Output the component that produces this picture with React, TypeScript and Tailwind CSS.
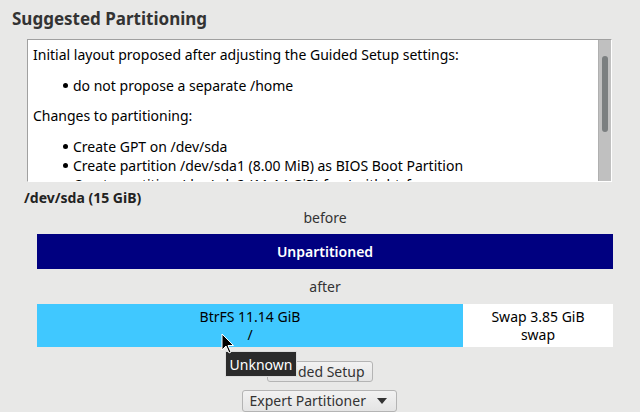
import React from "react";

const font = { fontFamily: '"Noto Sans", "Open Sans", sans-serif' };

function Bullet({ children }: { children: React.ReactNode }) {
  return (
    <div className="flex items-center h-[19px] pl-[30px] whitespace-nowrap">
      <span className="w-[5px] h-[5px] rounded-full bg-black mr-[5px]" />
      <span>{children}</span>
    </div>
  );
}

export default function App() {
  return (
    <div
      className="relative w-[640px] h-[412px] overflow-hidden bg-[#e8e8e7] text-[#202020]"
      style={font}
    >
      <div className="pl-[12px] pt-[7px] h-[39px]">
        <h1 className="text-[17px] font-bold leading-[24px] text-[#333]">Suggested Partitioning</h1>
      </div>
      <div className="ml-[27px] w-[585px] h-[143px] flex border-t border-l border-[#a0a0a0] border-b border-r border-b-white border-r-white bg-white">
        <div className="flex-1 overflow-hidden px-[5px] pt-[5px] text-[14px] leading-[19px] text-black">
          <div className="h-[19px] whitespace-nowrap">Initial layout proposed after adjusting the Guided Setup settings:</div>
          <div className="mt-[12px]">
            <Bullet>do not propose a separate /home</Bullet>
          </div>
          <div className="mt-[11px] h-[19px]">Changes to partitioning:</div>
          <div className="mt-[12px]">
            <Bullet>Create GPT on /dev/sda</Bullet>
            <Bullet>Create partition /dev/sda1 (8.00 MiB) as BIOS Boot Partition</Bullet>
            <Bullet>Create partition /dev/sda2 (11.14 GiB) for / with btrfs</Bullet>
          </div>
        </div>
        <div className="w-[13px] h-full bg-[#c0c0c0] border-l border-[#b0b0b0] flex justify-center pt-[16px]">
          <div className="w-[6px] h-[76px] rounded-full bg-[#7b7f80]" />
        </div>
      </div>

      <div className="pl-[24px] mt-[7px] text-[14px] font-bold leading-[18px] text-[#222]">/dev/sda (15 GiB)</div>

      <div className="ml-[37px] w-[576px]">
        <div className="text-center text-[14px] leading-[19px] h-[19px] mt-[1px] text-[#333]">before</div>
        <div className="mt-[7px] h-[35px] bg-[#000080] text-white font-semibold text-[14px] flex items-center justify-center">
          Unpartitioned
        </div>
        <div className="text-center text-[14px] leading-[19px] h-[19px] mt-[8px] text-[#333]">after</div>
        <div className="mt-[8px] h-[43px] flex text-[14px] leading-[18px] text-black">
          <div className="w-[426px] bg-[#40c8ff] flex flex-col items-center justify-center">
            <span>BtrFS 11.14 GiB</span>
            <span>/</span>
          </div>
          <div className="flex-1 bg-white flex flex-col items-center justify-center">
            <span>Swap 3.85 GiB</span>
            <span>swap</span>
          </div>
        </div>
      </div>

      <div className="flex flex-col items-center mt-[14px] gap-[8px] text-[14px] text-[#333]">
        <button className="w-[106px] h-[21px] rounded-[3px] border border-[#b4b4b4] bg-gradient-to-b from-[#f2f2f2] to-[#e4e4e4] leading-[19px]">
          Guided Setup
        </button>
        <button className="w-[155px] h-[22px] rounded-[3px] border border-[#b4b4b4] bg-gradient-to-b from-[#f2f2f2] to-[#e4e4e4] leading-[20px] flex items-center pl-[7px] -ml-[2px]">
          <span>Expert Partitioner</span>
          <svg className="ml-[11px]" width="10" height="6" viewBox="0 0 10 6">
            <path d="M0 0 L10 0 L5 6 Z" fill="#333" />
          </svg>
        </button>
      </div>

      {/* tooltip */}
      <div className="absolute left-[225px] top-[351px] w-[72px] h-[26px] bg-[#2b2b2b] border border-[#dcdcdc] text-white text-[14px] flex items-center justify-center">
        Unknown
      </div>

      {/* cursor */}
      <svg className="absolute left-[221px] top-[333px]" width="14" height="22" viewBox="0 0 14 22">
        <path d="M1 1 L1 17 L5 13 L8 20 L10 19 L7 12.5 L12.5 12.5 Z" fill="#000" stroke="#fff" strokeWidth="1" />
      </svg>
    </div>
  );
}
